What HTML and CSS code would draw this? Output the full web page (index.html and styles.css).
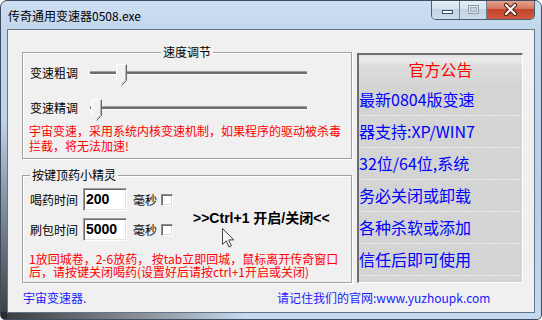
FILE: index.html
```html
<!DOCTYPE html>
<html lang="zh-CN">
<head>
<meta charset="utf-8">
<title>传奇通用变速器0508.exe</title>
<link rel="stylesheet" href="styles.css">
</head>
<body>
<div class="window">
  <div class="titlebar">
    <span class="title">传奇通用变速器0508.exe</span>
    <div class="caption-buttons">
      <span class="cap-btn cap-min"><svg width="28" height="19" viewBox="0 0 28 19"><rect x="10.5" y="10.5" width="10" height="3" fill="#fff" stroke="#3b4656"/></svg></span>
      <span class="cap-btn cap-max"><svg width="27" height="19" viewBox="0 0 27 19"><rect x="8.5" y="5.5" width="10" height="8" fill="#dfe7f0" stroke="#8f9cab"/><rect x="10.5" y="7.5" width="6" height="4" fill="#c9d3de" stroke="#a3aebb"/></svg></span>
      <span class="cap-btn cap-close"><svg width="47" height="19" viewBox="0 0 47 19"><path d="M19 5 L28 14 M28 5 L19 14" stroke="#4a1a12" stroke-width="4.2" stroke-linecap="round"/><path d="M19 5 L28 14 M28 5 L19 14" stroke="#fff" stroke-width="2.2" stroke-linecap="round"/></svg></span>
    </div>
  </div>
  <div class="client">
    <div class="main">
      <div class="left">
        <section class="group g1">
          <span class="group-title title-center">速度调节</span>
          <div class="slider-row">
            <span class="label">变速粗调</span>
            <div class="slider">
              <div class="track"></div>
              <svg class="thumb" style="left:26px" width="11" height="23" viewBox="0 0 11 23"><path d="M0.5 0.5H10.5V16.5L5.5 21.5L0.5 16.5Z" fill="#f2f2f2"/><path d="M10.5 0.5V16.5L5.5 21.5" fill="none" stroke="#6a6a6a"/><path d="M9.5 1.5V16L5.5 20" fill="none" stroke="#b4b4b4"/><path d="M0.5 16.5V0.5H10" fill="none" stroke="#fff"/></svg>
            </div>
          </div>
          <div class="slider-row">
            <span class="label">变速精调</span>
            <div class="slider">
              <div class="track"></div>
              <svg class="thumb" style="left:1px" width="11" height="23" viewBox="0 0 11 23"><path d="M0.5 0.5H10.5V16.5L5.5 21.5L0.5 16.5Z" fill="#f2f2f2"/><path d="M10.5 0.5V16.5L5.5 21.5" fill="none" stroke="#6a6a6a"/><path d="M9.5 1.5V16L5.5 20" fill="none" stroke="#b4b4b4"/><path d="M0.5 16.5V0.5H10" fill="none" stroke="#fff"/></svg>
            </div>
          </div>
          <p class="warn warn-speed">宇宙变速，采用系统内核变速机制，如果程序的驱动被杀毒<br>拦截，将无法加速!</p>
        </section>
        <section class="group g2">
          <span class="group-title title-left">按键顶药小精灵</span>
          <div class="g2-body">
            <div class="fields">
              <div class="field-row">
                <span class="label label-short">喝药时间</span>
                <span class="input">200</span>
                <span class="unit">毫秒</span>
                <span class="check"></span>
              </div>
              <div class="field-row">
                <span class="label label-short">刷包时间</span>
                <span class="input">5000</span>
                <span class="unit">毫秒</span>
                <span class="check"></span>
              </div>
            </div>
            <div class="hotkey">&gt;&gt;Ctrl+1 开启/关闭&lt;&lt;</div>
          </div>
          <p class="warn warn-keys">1放回城卷，2-6放药， 按tab立即回城，鼠标离开传奇窗口<br>后，请按键关闭喝药(设置好后请按ctrl+1开启或关闭)</p>
          <svg class="cursor" width="13" height="21" viewBox="0 0 13 21"><path d="M0.5 0.5V16.5L4.3 12.8L6.9 19L9.3 18L6.8 11.9H11.8Z" fill="#f4f4f4" stroke="#444" stroke-linejoin="round"/></svg>
        </section>
      </div>
      <div class="notice">
        <div class="notice-head">官方公告</div>
        <div class="notice-row">最新0804版变速</div>
        <div class="notice-row">器支持:XP/WIN7</div>
        <div class="notice-row">32位/64位,系统</div>
        <div class="notice-row">务必关闭或卸载</div>
        <div class="notice-row">各种杀软或添加</div>
        <div class="notice-row">信任后即可使用</div>
      </div>
    </div>
    <div class="footer">
      <span>宇宙变速器.</span>
      <span>请记住我们的官网:www.yuzhoupk.com</span>
    </div>
  </div>
</div>
</body>
</html>
```

FILE: styles.css
```css
html, body {
  margin: 0;
  padding: 0;
}
body {
  width: 542px;
  height: 320px;
  overflow: hidden;
  background: #ffffff;
  font-family: "Noto Sans CJK SC", "Noto Sans", sans-serif;
  font-size: 12px;
  color: #000;
}
.window {
  width: 542px;
  height: 320px;
  box-sizing: border-box;
  border: 1px solid #3d4c5e;
  border-radius: 7px 7px 5px 5px;
  overflow: hidden;
  display: flex;
  flex-direction: column;
  background:
    linear-gradient(to bottom, rgba(150,165,180,0) 0%, rgba(40,40,40,0.9) 100%) left 120px / 6px 200px no-repeat,
    linear-gradient(to right, rgba(30,30,30,0.85) 0%, rgba(120,120,120,0.6) 30%, rgba(200,215,230,0) 45%) left bottom / 542px 7px no-repeat,
    linear-gradient(to bottom, #cddff2 0%, #c2d6ec 30px, #b9cfe8 200px, #c5d9ef 100%);
}
.titlebar {
  height: 28px;
  display: flex;
  align-items: flex-start;
  padding-left: 7px;
}
.title {
  margin-top: 6px;
  line-height: 17px;
  font-size: 12px;
  color: #000;
}
.caption-buttons {
  margin-left: auto;
  margin-right: 6px;
  margin-top: -1px;
  display: flex;
  border: 1px solid #4d5d72;
  border-top: none;
  border-radius: 0 0 5px 5px;
  overflow: hidden;
  height: 19px;
}
.cap-btn {
  display: block;
  height: 19px;
}
.cap-btn svg {
  display: block;
}
.cap-min, .cap-max {
  background: linear-gradient(to bottom, #e9f0f8 0%, #d6e2ef 45%, #c3d3e5 50%, #cddcec 100%);
  border-right: 1px solid #6f7f94;
}
.cap-min { width: 27px; }
.cap-max { width: 26px; }
.cap-close {
  width: 47px;
  background: linear-gradient(to bottom, #e6a593 0%, #d67a62 45%, #c2432a 50%, #cf5a3f 100%);
}
.client {
  width: 528px;
  height: 284px;
  box-sizing: border-box;
  margin: 0 6px;
  border: 1px solid #66768a;
  background: #f0f0f0;
  display: flex;
  flex-direction: column;
}
.main {
  display: flex;
  gap: 5px;
  margin-top: 22px;
  padding-left: 14px;
}
.left {
  width: 330px;
  display: flex;
  flex-direction: column;
  gap: 16px;
}
.group {
  position: relative;
  box-sizing: border-box;
  border: 1px solid #a0a0a0;
  box-shadow: inset 1px 1px 0 #fff, 1px 1px 0 #fff;
  padding-left: 6px;
}
.g1 {
  height: 107px;
  padding-top: 9px;
}
.g2 {
  height: 108px;
  padding-top: 12px;
}
.group-title {
  position: absolute;
  top: -8px;
  line-height: 14px;
  padding: 0 2px;
  background: #f0f0f0;
  white-space: nowrap;
}
.title-center {
  left: 50%;
  transform: translateX(-50%);
}
.title-left {
  left: 7px;
}
.slider-row {
  display: flex;
  align-items: flex-start;
  height: 22px;
}
.slider-row + .slider-row {
  margin-top: 13px;
}
.label {
  width: 61px;
  padding-left: 1px;
  box-sizing: border-box;
  line-height: 22px;
  white-space: nowrap;
}
.slider {
  position: relative;
  width: 217px;
  height: 22px;
}
.track {
  margin-top: 9px;
  height: 4px;
  box-sizing: border-box;
  border-top: 1px solid #a0a0a0;
  border-bottom: 1px solid #ffffff;
  background: #6d6d6d;
}
.thumb {
  position: absolute;
  top: 2px;
  display: block;
}
.warn {
  margin: 0;
  color: #ff0000;
  white-space: nowrap;
}
.warn-speed {
  margin-top: 4px;
  line-height: 15px;
}
.warn-keys {
  margin-top: 11px;
  line-height: 13px;
}
.g2-body {
  display: flex;
}
.field-row {
  display: flex;
  align-items: center;
  height: 23px;
}
.field-row + .field-row {
  margin-top: 7px;
}
.label-short {
  width: 54px;
}
.input {
  width: 44px;
  height: 23px;
  box-sizing: border-box;
  border: 1px solid;
  border-color: #a0a0a0 #ffffff #ffffff #a0a0a0;
  box-shadow: inset 1px 1px 0 #696969, inset -1px -1px 0 #e3e3e3;
  background: #ffffff;
  font-family: "Liberation Sans", Arial, sans-serif;
  font-weight: bold;
  font-size: 14px;
  line-height: 21px;
  padding-left: 2px;
}
.unit {
  margin-left: 6px;
}
.check {
  width: 12px;
  height: 12px;
  box-sizing: border-box;
  margin-left: 4px;
  border: 1px solid;
  border-color: #8d8d8d #ffffff #ffffff #8d8d8d;
  box-shadow: inset 1px 1px 0 #6a6a6a, inset -1px -1px 0 #dcdcdc;
  background: #ffffff;
}
.hotkey {
  align-self: center;
  margin-left: 20px;
  margin-top: 5px;
  font-family: "Liberation Sans", "Noto Sans CJK SC", sans-serif;
  font-weight: bold;
  font-size: 14px;
  white-space: nowrap;
}
.cursor {
  position: absolute;
  left: 199px;
  top: 52px;
  display: block;
}
.notice {
  width: 166px;
  height: 230px;
  margin-top: 1px;
  box-sizing: border-box;
  border-top: 2px solid #6e6e6e;
  border-left: 2px solid #6e6e6e;
  border-right: 1px solid #ffffff;
  border-bottom: 1px solid #ffffff;
  background: #d4d4d4;
  font-size: 16px;
}
.notice-head {
  height: 29px;
  line-height: 29px;
  text-align: center;
  color: #ff0000;
  background: linear-gradient(to bottom, #e2e2e2 0%, #ececec 15%, #dcdcdc 40%, #d6d6d6 100%);
}
.notice-row {
  height: 32px;
  line-height: 31px;
  color: #0000ff;
  white-space: nowrap;
  background: repeating-linear-gradient(to right, #efefef 0 2px, transparent 2px 3px) left bottom / 100% 1px no-repeat;
}
.footer {
  display: grid;
  grid-template-columns: 254px auto;
  padding-left: 15px;
  height: 29px;
  line-height: 29px;
  color: #1a1aff;
  white-space: nowrap;
}
```
